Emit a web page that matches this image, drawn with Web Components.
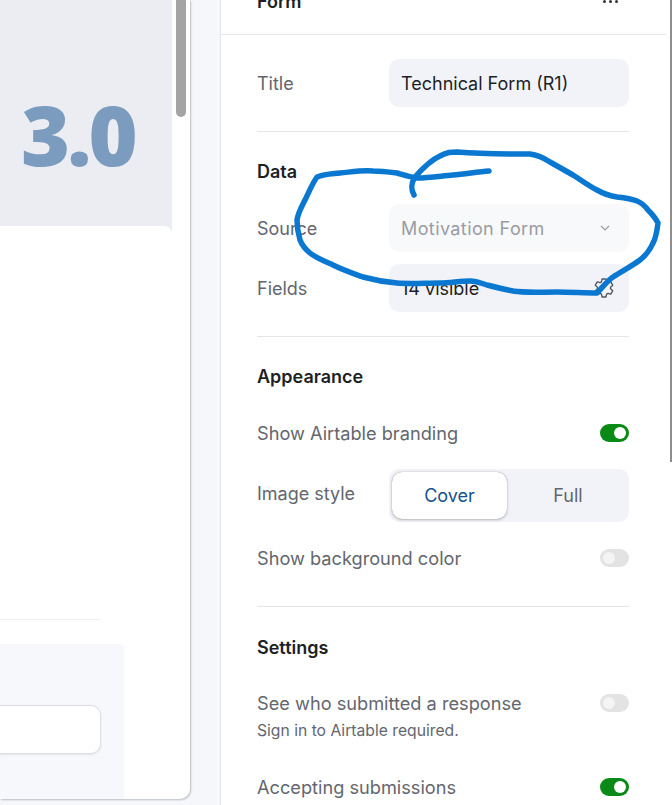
<!DOCTYPE html>
<html>
<head>
<meta charset="utf-8">
<title>Form</title>
<style>
  html, body { margin: 0; height: 100%; overflow: hidden; background: #fff; }
  body { font-family: Inter, "Noto Sans", sans-serif; }
  #app { display: flex; height: 805px; position: relative; }
</style>
</head>
<body>
<div id="app">
  <form-canvas version="3.0"></form-canvas>
  <settings-panel>
    <panel-section>
      <setting-row label="Title"><text-field>Technical Form (R1)</text-field></setting-row>
    </panel-section>
    <panel-section heading="Data" style="--row-gap:12px">
      <setting-row label="Source"><text-field disabled icon="chevron">Motivation Form</text-field></setting-row>
      <setting-row label="Fields"><text-field icon="gear">14 visible</text-field></setting-row>
    </panel-section>
    <panel-section heading="Appearance" style="--head-gap:31px;--row-gap:23px;--pad-bottom:35px">
      <toggle-row label="Show Airtable branding" on></toggle-row>
      <setting-row label="Image style" style="--label-shift:-5px"><segmented-control selected="Cover" options="Cover,Full"></segmented-control></setting-row>
      <toggle-row label="Show background color"></toggle-row>
    </panel-section>
    <panel-section heading="Settings" last style="--head-top:5px;--head-gap:30px;--row-gap:32px">
      <toggle-row label="See who submitted a response" hint="Sign in to Airtable required."></toggle-row>
      <toggle-row label="Accepting submissions" on></toggle-row>
    </panel-section>
  </settings-panel>
  <ink-scribble></ink-scribble>
</div>

<script>
function makeShadow(el, html) {
  const shadow = el.attachShadow({ mode: 'open' });
  const template = document.createElement('template');
  template.innerHTML = html;
  shadow.appendChild(template.content.cloneNode(true));
  return shadow;
}

class FormCanvas extends HTMLElement {
  connectedCallback() {
    makeShadow(this, `
      <style>
        :host {
          display: block;
          flex: none;
          width: 220px;
          height: 805px;
          background: #f6f7fb;
          border-right: 1px solid #e1e3e8;
        }
        .card {
          display: flex;
          width: 190px;
          height: 799px;
          background: #fff;
          border-radius: 0 0 10px 0;
          box-shadow: 1px 1px 2px rgba(60, 65, 80, .32);
          overflow: hidden;
        }
        .page { width: 172px; flex: none; background: #ebedf2; display: flex; flex-direction: column; }
        .cover { height: 226px; flex: none; box-sizing: border-box; padding: 92px 0 0 21px; }
        .version {
          font: 800 84px/1 "Open Sans", sans-serif;
          letter-spacing: -3px;
          color: #7b9bbf;
          filter: blur(.4px);
        }
        .body {
          flex: 1;
          background: #fff;
          border-radius: 0 8px 0 0;
          display: flex;
          flex-direction: column;
          padding-top: 393px;
        }
        .rule { width: 100px; height: 1px; background: #eeeff2; }
        .footer {
          margin-top: 24px;
          flex: 1;
          width: 124px;
          box-sizing: border-box;
          background: #f7f8fb;
          border-radius: 0 4px 0 0;
          padding-top: 61px;
        }
        .button {
          width: 101px;
          height: 49px;
          box-sizing: border-box;
          background: #fff;
          border: 1px solid #dcdee3;
          border-left: 0;
          border-radius: 0 10px 10px 0;
          box-shadow: 0 1px 2px rgba(60, 65, 80, .1);
        }
        .gutter { flex: 1; padding-left: 4px; }
        .thumb { width: 10px; height: 117px; background: #a4a4a4; border-radius: 0 0 5px 5px; }
      </style>
      <div class="card">
        <div class="page">
          <div class="cover"><div class="version">${this.getAttribute('version')}</div></div>
          <div class="body">
            <div class="rule"></div>
            <div class="footer"><div class="button"></div></div>
          </div>
        </div>
        <div class="gutter"><div class="thumb"></div></div>
      </div>
    `);
  }
}

class SettingsPanel extends HTMLElement {
  connectedCallback() {
    makeShadow(this, `
      <style>
        :host {
          display: flex;
          flex: 1;
          min-width: 0;
          height: 805px;
          overflow: hidden;
          color: #1d1f25;
        }
        .main { width: 445px; flex: none; }
        .head {
          height: 35px;
          box-sizing: border-box;
          border-bottom: 1px solid #e5e6ea;
          padding: 0 48px 0 36px;
          display: flex;
          justify-content: space-between;
          align-items: flex-end;
          overflow: hidden;
        }
        .title { font-size: 18px; line-height: 22px; font-weight: 600; margin-bottom: 21px; }
        .more { display: flex; gap: 3px; margin-bottom: 31px; }
        .more i { width: 3px; height: 3px; border-radius: 50%; background: #333; }
        .content { padding: 0 37px 0 36px; }
        .gutter { flex: 1; padding-left: 4px; }
        .thumb { width: 2px; height: 462px; background: #8e8e8e; }
      </style>
      <div class="main">
        <div class="head">
          <div class="title">Form</div>
          <div class="more"><i></i><i></i><i></i></div>
        </div>
        <div class="content"><slot></slot></div>
      </div>
      <div class="gutter"><div class="thumb"></div></div>
    `);
  }
}

class PanelSection extends HTMLElement {
  connectedCallback() {
    const heading = this.getAttribute('heading');
    makeShadow(this, `
      <style>
        :host {
          display: block;
          padding: 24px 0 var(--pad-bottom, 24px);
          border-bottom: 1px solid #e5e6ea;
        }
        :host([last]) { border-bottom: 0; }
        h3 {
          margin: var(--head-top, 4px) 0 var(--head-gap, 20px);
          font-size: 18px;
          line-height: 24px;
          font-weight: 600;
          color: #1d1f25;
        }
        .rows { display: flex; flex-direction: column; gap: var(--row-gap, 24px); }
      </style>
      ${heading ? `<h3>${heading}</h3>` : ''}
      <div class="rows"><slot></slot></div>
    `);
  }
}

class SettingRow extends HTMLElement {
  connectedCallback() {
    makeShadow(this, `
      <style>
        :host { display: flex; align-items: center; }
        .label { width: 132px; flex: none; font-size: 18px; color: #63666e; margin-top: var(--label-shift, 0); }
        .control { flex: 1; min-width: 0; }
      </style>
      <div class="label">${this.getAttribute('label')}</div>
      <div class="control"><slot></slot></div>
    `);
  }
}

// six round teeth, same outline as the cog in the fields picker
function cogPath() {
  const pts = [];
  for (let i = 0; i < 6; i++) {
    const a = (i * 60 - 90) * Math.PI / 180;
    const at = (r, d) => {
      const t = a + d * Math.PI / 180;
      return (12 + r * Math.cos(t)).toFixed(1) + ' ' + (12 + r * Math.sin(t)).toFixed(1);
    };
    pts.push(at(7.2, -23), at(10, -12), at(10, 12), at(7.2, 23));
  }
  return 'M' + pts.join('L') + 'Z';
}

const ICONS = {
  chevron: `<svg width="12" height="12" viewBox="0 0 12 12" fill="none" stroke="#9a9ca3" stroke-width="1.2" style="margin-right:4px"><path d="M2 4l4 4 4-4"/></svg>`,
  gear: `<svg width="22" height="22" viewBox="0 0 24 24" fill="none" stroke="#55585f" stroke-width="1.5" stroke-linejoin="round"><path d="${cogPath()}"/></svg>`
};

class TextField extends HTMLElement {
  connectedCallback() {
    const icon = this.getAttribute('icon');
    makeShadow(this, `
      <style>
        :host {
          display: flex;
          align-items: center;
          justify-content: space-between;
          height: 48px;
          box-sizing: border-box;
          padding: 0 14px 0 12px;
          border-radius: 10px;
          background: #f2f3f8;
          color: #1d1f25;
          font-size: 18px;
        }
        :host([disabled]) { background: #f8f9fb; color: #9a9ca3; letter-spacing: .4px; }
        .icon { display: flex; }
      </style>
      <span><slot></slot></span>
      ${icon ? `<span class="icon">${ICONS[icon]}</span>` : ''}
    `);
  }
}

class ToggleRow extends HTMLElement {
  connectedCallback() {
    const hint = this.getAttribute('hint');
    makeShadow(this, `
      <style>
        :host { display: block; }
        .line { display: flex; justify-content: space-between; align-items: center; }
        .label { font-size: 18.2px; line-height: 26px; color: #63666e; }
        .hint { font-size: 15.7px; line-height: 22px; margin-top: 4px; color: #63666e; }
        .track {
          width: 29px;
          height: 18px;
          box-sizing: border-box;
          padding: 3px;
          border-radius: 9px;
          background: #e3e3e4;
          display: flex;
        }
        .knob { width: 12px; height: 12px; border-radius: 50%; background: #f4f4f5; }
        :host([on]) .track { background: #0b8a17; justify-content: flex-end; }
        :host([on]) .knob { background: #fff; }
      </style>
      <div class="line">
        <div class="label">${this.getAttribute('label')}</div>
        <div class="track"><div class="knob"></div></div>
      </div>
      ${hint ? `<div class="hint">${hint}</div>` : ''}
    `);
  }
}

class SegmentedControl extends HTMLElement {
  connectedCallback() {
    const selected = this.getAttribute('selected');
    const options = this.getAttribute('options').split(',');
    makeShadow(this, `
      <style>
        :host {
          display: flex;
          height: 53px;
          box-sizing: border-box;
          padding: 3px 0 3px 3px;
          border-radius: 10px;
          background: #f2f3f8;
        }
        .opt {
          flex: 1;
          display: flex;
          align-items: center;
          justify-content: center;
          font-size: 18px;
          color: #63666e;
          border-radius: 10px;
        }
        .opt.on {
          flex: 0 0 115px;
          background: #fff;
          color: #15518f;
          box-shadow: 0 0 1px rgba(0,0,0,.45), 0 1px 3px rgba(0,0,0,.22);
        }
      </style>
      ${options.map(o => `<div class="opt${o === selected ? ' on' : ''}">${o}</div>`).join('')}
    `);
  }
}

// hand-drawn annotation lying over the panel
class InkScribble extends HTMLElement {
  connectedCallback() {
    makeShadow(this, `
      <style>
        :host { position: absolute; left: 0; top: 0; pointer-events: none; }
        svg { display: block; }
      </style>
      <svg width="672" height="805" fill="none" stroke="#0a78d0" stroke-width="5.5" stroke-linecap="round" stroke-linejoin="round">
        <path d="M414 195C411 190 411 183 415 177C422 169 431 160 440 156C447 152 451 152 457 152C470 153 510 154 530 154C538 155 544 158 550 162L573 175C581 180 589 186 597 190C604 194 610 196 617 197C626 198 632 199 637 201C642 203 645 206 648 210C653 215 656 219 658 223C657 231 656 238 653 243C650 250 645 256 640 260C632 266 622 271 613 277C607 281 602 288 597 293C585 293 570 292 557 292C540 292 525 293 513 291C503 289 495 287 487 285C481 283 476 281 470 281C460 281 450 283 440 283C425 283 410 284 397 283C385 282 374 280 363 277C352 273 343 270 333 265C324 261 316 258 310 253C305 249 302 245 300 240C298 233 297 227 297 220C298 213 302 206 305 200C309 192 312 184 317 177C325 174 332 174 340 173C351 172 362 170 373 171C381 171 389 172 397 173C404 175 410 177 417 178C429 178 441 176 453 175C465 174 477 172 489 171"/>
      </svg>
    `);
  }
}

customElements.define('form-canvas', FormCanvas);
customElements.define('settings-panel', SettingsPanel);
customElements.define('panel-section', PanelSection);
customElements.define('setting-row', SettingRow);
customElements.define('text-field', TextField);
customElements.define('toggle-row', ToggleRow);
customElements.define('segmented-control', SegmentedControl);
customElements.define('ink-scribble', InkScribble);
</script>
</body>
</html>
